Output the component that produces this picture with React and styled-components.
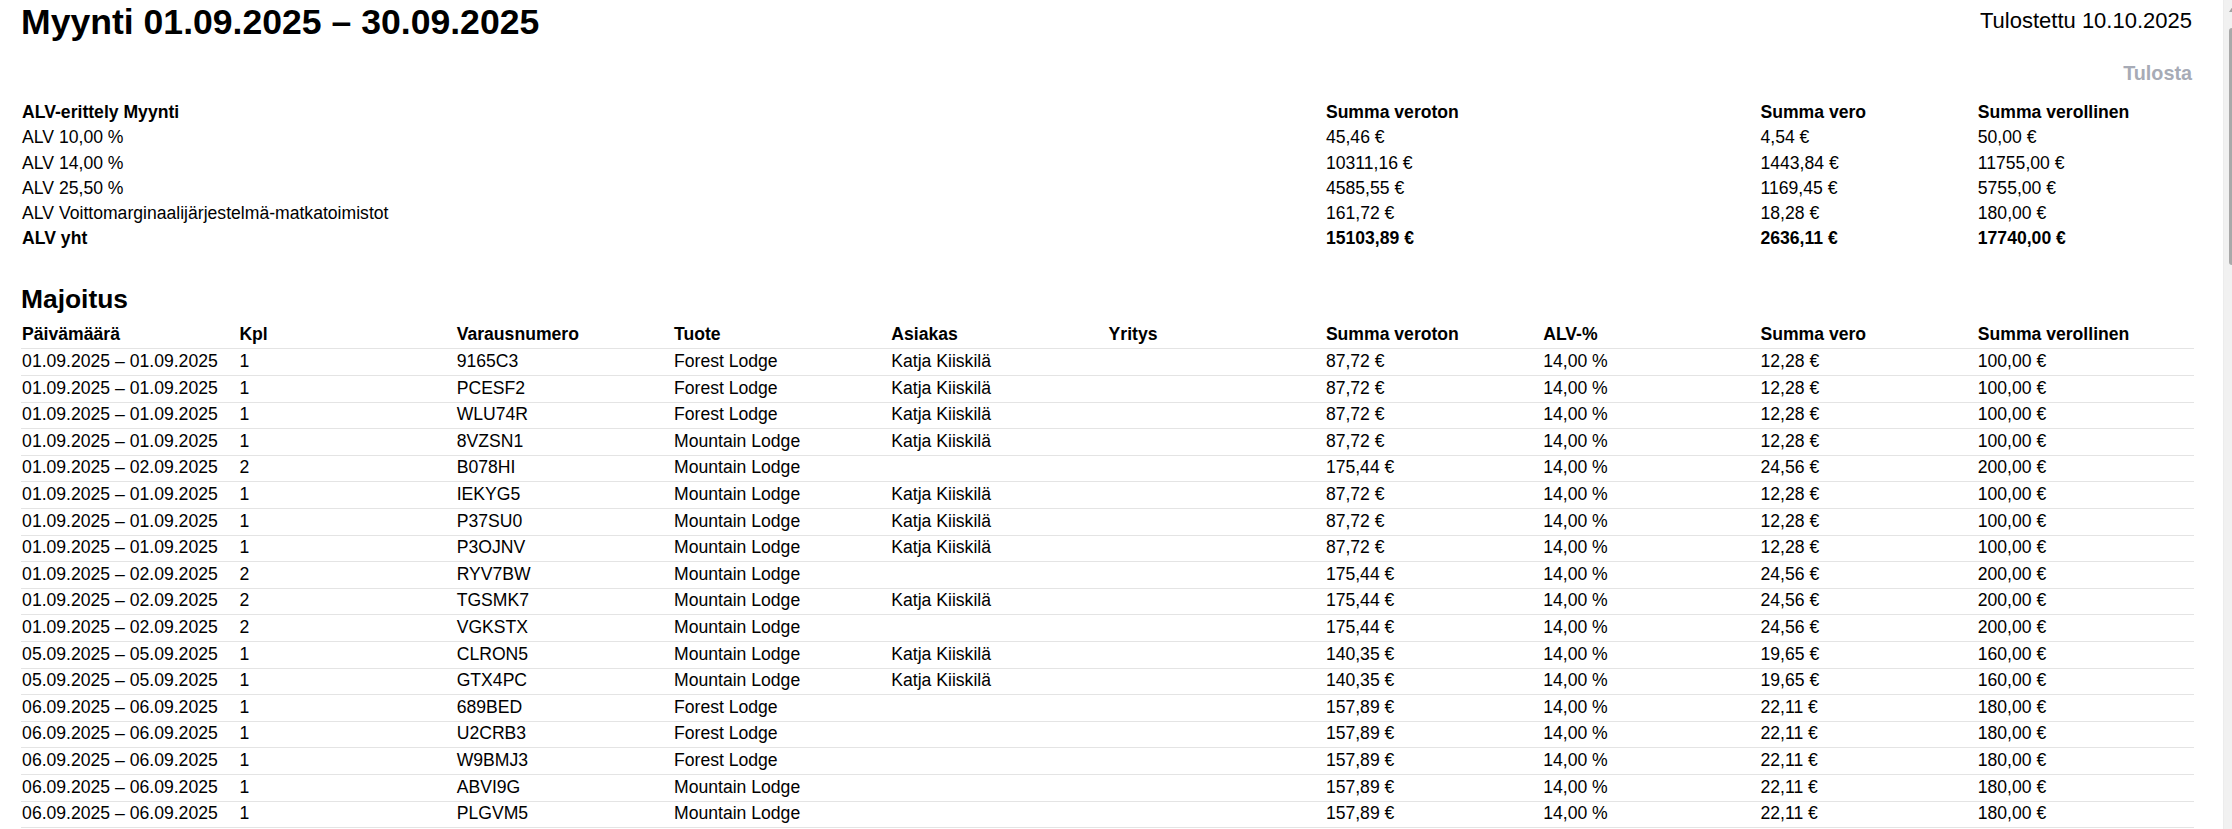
import styled, { createGlobalStyle } from 'styled-components';

const GlobalStyle = createGlobalStyle`
  html, body {
    margin: 0;
    padding: 0;
    background: #fff;
    overflow: hidden;
  }
  body {
    font-family: "Liberation Sans", Arial, Helvetica, sans-serif;
    color: #000;
    font-size: 17.6px;
  }
`;

const Frame = styled.div`
  display: grid;
  grid-template-columns: 1fr 9px;
  height: 100vh;
  overflow: hidden;
`;

const Page = styled.main`
  padding: 2px 29px 0 21px;
  min-width: 0;
`;

const Header = styled.header`
  display: flex;
  justify-content: space-between;
  align-items: flex-start;
`;

const Title = styled.h1`
  margin: 0;
  font-size: 35.6px;
  font-weight: 700;
  line-height: 40.4px;
`;

const Printed = styled.div`
  margin-top: 6px;
  padding-right: 2px;
  font-size: 22px;
  line-height: 25.3px;
`;

const Actions = styled.div`
  display: flex;
  justify-content: flex-end;
  margin-top: 19.4px;
`;

const PrintButton = styled.button`
  border: 0;
  background: none;
  padding: 0 2px 0 0;
  font-family: inherit;
  font-size: 19.8px;
  font-weight: 700;
  line-height: 22.8px;
  color: #a7abb6;
  cursor: pointer;
`;

const Table = styled.table`
  width: 100%;
  table-layout: fixed;
  border-collapse: collapse;
  margin-top: ${(p) => p.$top}px;
`;

const Cell = styled.td`
  padding: ${(p) => (p.$lined ? '1.6px 1.1px 3.8px' : '2.5px 1.1px')};
  border-bottom: ${(p) => (p.$lined ? '1px solid #e4e4e4' : '0')};
  font-weight: ${(p) => (p.$bold ? 700 : 400)};
  text-align: left;
  line-height: 20.2px;
  white-space: nowrap;
  overflow: hidden;
`;

const SectionTitle = styled.h2`
  margin: 33.6px 0 0;
  font-size: 26.4px;
  font-weight: 700;
  line-height: 30.4px;
`;

const ScrollTrack = styled.div`
  position: relative;
  background: #f1f1f1;
  border-left: 1px solid #ececec;
`;

const ScrollArrow = styled.svg`
  position: absolute;
  top: 6px;
  left: 5px;
`;

const ScrollThumb = styled.div`
  margin: 28px 0 0 5px;
  height: 237px;
  background: #a9a9a9;
  border-radius: 4px 0 0 4px;
`;

const vatRows = [
  ['ALV 10,00 %', '45,46 €', '4,54 €', '50,00 €'],
  ['ALV 14,00 %', '10311,16 €', '1443,84 €', '11755,00 €'],
  ['ALV 25,50 %', '4585,55 €', '1169,45 €', '5755,00 €'],
  ['ALV Voittomarginaalijärjestelmä-matkatoimistot', '161,72 €', '18,28 €', '180,00 €'],
];

const K = 'Katja Kiiskilä';
const F = 'Forest Lodge';
const M = 'Mountain Lodge';
const a = ['87,72 €', '14,00 %', '12,28 €', '100,00 €'];
const b = ['175,44 €', '14,00 %', '24,56 €', '200,00 €'];
const c = ['140,35 €', '14,00 %', '19,65 €', '160,00 €'];
const d = ['157,89 €', '14,00 %', '22,11 €', '180,00 €'];

const stay = [
  ['01.09.2025 – 01.09.2025', '1', '9165C3', F, K, a],
  ['01.09.2025 – 01.09.2025', '1', 'PCESF2', F, K, a],
  ['01.09.2025 – 01.09.2025', '1', 'WLU74R', F, K, a],
  ['01.09.2025 – 01.09.2025', '1', '8VZSN1', M, K, a],
  ['01.09.2025 – 02.09.2025', '2', 'B078HI', M, '', b],
  ['01.09.2025 – 01.09.2025', '1', 'IEKYG5', M, K, a],
  ['01.09.2025 – 01.09.2025', '1', 'P37SU0', M, K, a],
  ['01.09.2025 – 01.09.2025', '1', 'P3OJNV', M, K, a],
  ['01.09.2025 – 02.09.2025', '2', 'RYV7BW', M, '', b],
  ['01.09.2025 – 02.09.2025', '2', 'TGSMK7', M, K, b],
  ['01.09.2025 – 02.09.2025', '2', 'VGKSTX', M, '', b],
  ['05.09.2025 – 05.09.2025', '1', 'CLRON5', M, K, c],
  ['05.09.2025 – 05.09.2025', '1', 'GTX4PC', M, K, c],
  ['06.09.2025 – 06.09.2025', '1', '689BED', F, '', d],
  ['06.09.2025 – 06.09.2025', '1', 'U2CRB3', F, '', d],
  ['06.09.2025 – 06.09.2025', '1', 'W9BMJ3', F, '', d],
  ['06.09.2025 – 06.09.2025', '1', 'ABVI9G', M, '', d],
  ['06.09.2025 – 06.09.2025', '1', 'PLGVM5', M, '', d],
];

const stayHead = [
  'Päivämäärä', 'Kpl', 'Varausnumero', 'Tuote', 'Asiakas', 'Yritys',
  'Summa veroton', 'ALV-%', 'Summa vero', 'Summa verollinen',
];

const VatTable = () => (
  <Table $top={15}>
    <colgroup>
      <col style={{ width: '60%' }} />
      <col style={{ width: '20%' }} />
      <col style={{ width: '10%' }} />
      <col style={{ width: '10%' }} />
    </colgroup>
    <thead>
      <tr>
        {['ALV-erittely Myynti', 'Summa veroton', 'Summa vero', 'Summa verollinen'].map((h) => (
          <Cell as="th" key={h} $bold>{h}</Cell>
        ))}
      </tr>
    </thead>
    <tbody>
      {vatRows.map((r) => (
        <tr key={r[0]}>
          {r.map((v, i) => <Cell key={i}>{v}</Cell>)}
        </tr>
      ))}
      <tr>
        {['ALV yht', '15103,89 €', '2636,11 €', '17740,00 €'].map((v) => (
          <Cell key={v} $bold>{v}</Cell>
        ))}
      </tr>
    </tbody>
  </Table>
);

const StayTable = () => (
  <Table $top={8}>
    <thead>
      <tr>
        {stayHead.map((h) => (
          <Cell as="th" key={h} $bold $lined>{h}</Cell>
        ))}
      </tr>
    </thead>
    <tbody>
      {stay.map(([date, qty, code, product, customer, sums]) => (
        <tr key={code}>
          <Cell $lined>{date}</Cell>
          <Cell $lined>{qty}</Cell>
          <Cell $lined>{code}</Cell>
          <Cell $lined>{product}</Cell>
          <Cell $lined>{customer}</Cell>
          <Cell $lined></Cell>
          {sums.map((s, i) => <Cell key={i} $lined>{s}</Cell>)}
        </tr>
      ))}
    </tbody>
  </Table>
);

export default function App() {
  return (
    <>
      <GlobalStyle />
      <Frame>
        <Page>
          <Header>
            <Title>Myynti 01.09.2025 – 30.09.2025</Title>
            <Printed>Tulostettu 10.10.2025</Printed>
          </Header>
          <Actions>
            <PrintButton type="button">Tulosta</PrintButton>
          </Actions>
          <VatTable />
          <SectionTitle>Majoitus</SectionTitle>
          <StayTable />
        </Page>
        <ScrollTrack>
          <ScrollArrow width="8" height="6" viewBox="0 0 8 6">
            <path d="M4 0 L8 6 L0 6 Z" fill="#a3a3a3" />
          </ScrollArrow>
          <ScrollThumb />
        </ScrollTrack>
      </Frame>
    </>
  );
}
